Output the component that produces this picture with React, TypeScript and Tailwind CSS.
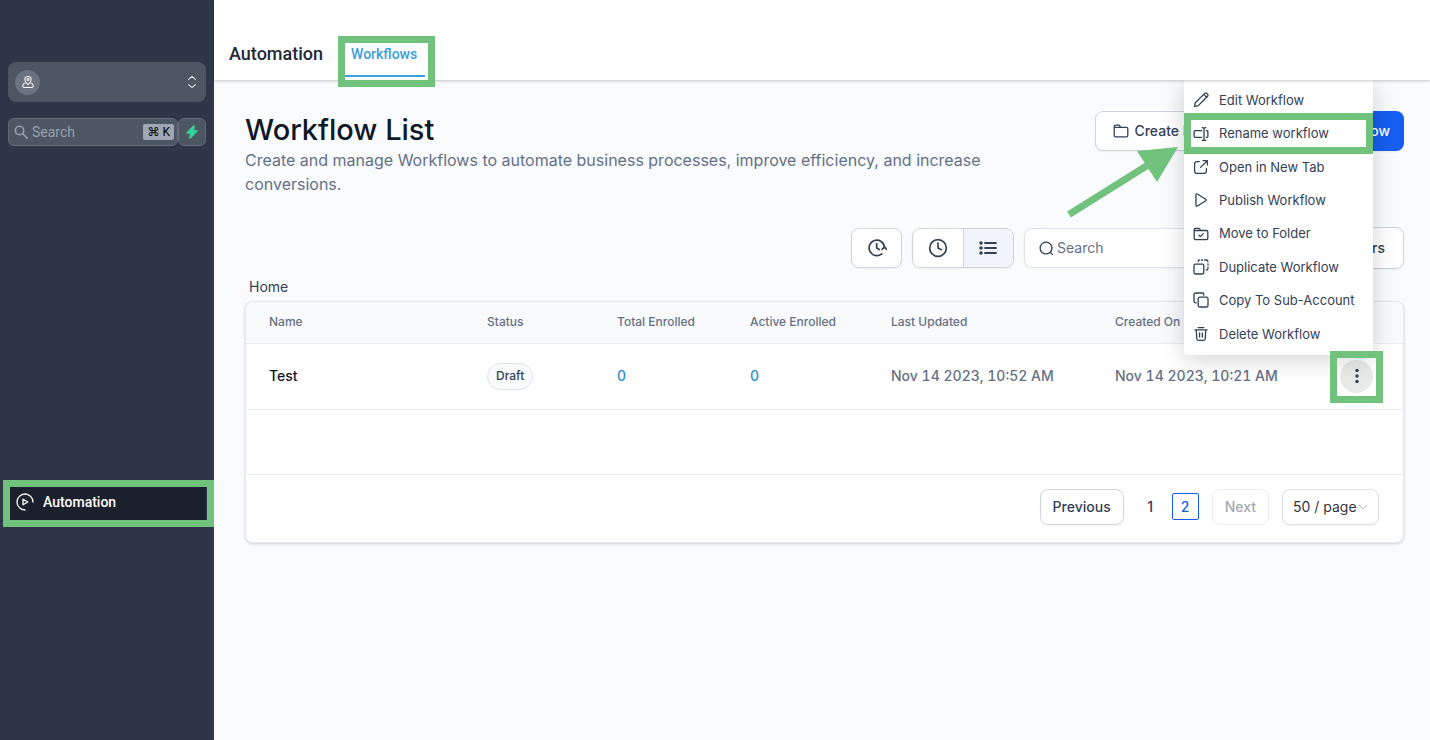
import React from "react";
import { ChevronDown, Clock } from "lucide-react";

type IconProps = { className?: string; children: React.ReactNode; width?: number };

function Icon({ className = "size-4", children, width = 1.3 }: IconProps) {
  return (
    <svg
      viewBox="0 0 16 16"
      className={className}
      fill="none"
      stroke="currentColor"
      strokeWidth={width}
      strokeLinecap="round"
      strokeLinejoin="round"
      aria-hidden="true"
    >
      {children}
    </svg>
  );
}

const menuItems: { label: string; icon: React.ReactNode; highlighted?: boolean }[] = [
  {
    label: "Edit Workflow",
    icon: <path d="M1.6 14.4l.5-3.4 8.6-8.6 2.9 2.9L5 13.9zM11 2.1l.7-.7a1.4 1.4 0 0 1 2 0l.9.9a1.4 1.4 0 0 1 0 2l-.7.7" />,
  },
  {
    label: "Rename workflow",
    highlighted: true,
    icon: (
      <>
        <path d="M8.6 4.7H2.1a1 1 0 0 0-1 1v4.6a1 1 0 0 0 1 1h6.5M13.3 4.7h.6a1 1 0 0 1 1 1v4.6a1 1 0 0 1-1 1h-.6" />
        <path d="M11 2.2v11.6M9.2 1.6c1 0 1.8.3 1.8 1 0-.7.8-1 1.8-1M9.2 14.4c1 0 1.8-.3 1.8-1 0 .7.8 1 1.8 1" />
      </>
    ),
  },
  {
    label: "Open in New Tab",
    icon: <path d="M6.3 2.6H4A2.4 2.4 0 0 0 1.6 5v7A2.4 2.4 0 0 0 4 14.4h7a2.4 2.4 0 0 0 2.4-2.4V9.7M10 1.6h4.4V6M14.2 1.8L7.6 8.4" />,
  },
  {
    label: "Publish Workflow",
    icon: <path d="M2.9 2.8c0-.8.8-1.2 1.4-.8l8.5 5.2c.6.4.6 1.2 0 1.6L4.3 14c-.6.4-1.4 0-1.4-.8z" />,
  },
  {
    label: "Move to Folder",
    icon: (
      <>
        <path d="M1.2 12.2V3.6c0-.7.5-1.2 1.2-1.2h3.3c.5 0 .9.2 1.1.6l.9 1.5h5.7c.8 0 1.4.6 1.4 1.4v6.3c0 .8-.6 1.4-1.4 1.4H2.6c-.8 0-1.4-.6-1.4-1.4zM1.4 4.5h6" />
        <path d="M5.8 9.1l1.5 1.5 3-3" />
      </>
    ),
  },
  {
    label: "Duplicate Workflow",
    icon: (
      <>
        <rect x="1" y="5.2" width="9.8" height="9.8" rx="1.4" />
        <path d="M5.2 2.6V2.3c0-.7.5-1.3 1.2-1.3M8.4 1h1.1M11.6 1h1.1M14.9 2.7c0-.9-.4-1.6-1.2-1.7M15 5v1.1M15 8.2v1M13.3 11c1 0 1.5-.5 1.6-1.2" />
      </>
    ),
  },
  {
    label: "Copy To Sub-Account",
    icon: (
      <>
        <rect x="5.2" y="5.2" width="9.8" height="9.8" rx="1.6" />
        <path d="M3.2 10.8h-.6A1.6 1.6 0 0 1 1 9.2V2.6A1.6 1.6 0 0 1 2.6 1h6.6a1.6 1.6 0 0 1 1.6 1.6v.6" />
      </>
    ),
  },
  {
    label: "Delete Workflow",
    icon: <path d="M1.9 3.8h12.2M5.2 1.6h5.6M3.2 3.8l.6 9c.1.9.6 1.5 1.5 1.5h5.4c.9 0 1.4-.6 1.5-1.5l.6-9M6.6 7v4M9.4 7v4" />,
  },
];

function Highlight({ className }: { className: string }) {
  return <span aria-hidden="true" className={`pointer-events-none absolute border-7 border-[#70c27c] ${className}`} />;
}

function Sidebar() {
  return (
    <aside className="flex w-[214px] shrink-0 flex-col bg-[#2d3748] px-2 pt-[62px] font-[Roboto,sans-serif]">
      <button type="button" aria-label="Switch account" className="flex h-10 items-center justify-between rounded-lg bg-[#4d5663] pr-2 pl-[7px] text-white">
        <span className="flex size-[25px] items-center justify-center rounded-full bg-[#6b7280]">
          <Icon className="size-[14px]" width={1.2}>
            <path d="M8 11C5.9 9 4.4 7.300 4.400 5.200a3.600 3.600 0 0 1 7.200 0C11.600 7.300 10.100 9 8 11z" />
            <circle cx="8" cy="5.200" r="1.100" />
            <path d="M4.600 9.200C2.900 9.700 2 10.900 2 12.200c0 1.200.9 2 2.200 2h7.600c1.300 0 2.200-.8 2.200-2 0-1.300-.9-2.500-2.600-3" />
          </Icon>
        </span>
        <Icon className="h-4 w-3 text-gray-200" width={1.4}>
          <path d="M3.500 4.500L8 .5l4.500 4M3.500 11.500l4.500 4 4.500-4" />
        </Icon>
      </button>

      <div className="mt-4 flex h-7">
        <label className="flex min-w-0 flex-1 items-center rounded-md border border-[#616a78] bg-[#4d5663] pr-[3px] pl-[5px]">
          <Icon className="size-[14px] shrink-0 text-gray-400" width={1.8}>
            <circle cx="6.300" cy="6.300" r="4.800" />
            <path d="M10 10l5 5" />
          </Icon>
          <input type="text" aria-label="Search" placeholder="Search" className="ml-1 min-w-0 flex-1 bg-transparent text-sm text-white outline-none placeholder:text-gray-400" />
          <kbd className="flex h-4 items-center rounded-xs bg-[#a0a6b2] px-1 font-[Roboto,'DejaVu_Sans',sans-serif] text-xs whitespace-nowrap text-black">⌘ K</kbd>
        </label>
        <button type="button" aria-label="Quick actions" className="flex w-7 items-center justify-center rounded-md border border-[#616a78] bg-[#4d5663]">
          <svg viewBox="0 0 12 14" className="h-[14px] w-3" aria-hidden="true">
            <path d="M7.200.8L.8 7.500c-.5.500-.2 1.100.5 1.100h3.100l-.9 3.900c-.1.800.6 1.200 1.200.7l6.500-6.800c.5-.5.2-1.100-.5-1.100H7.700l.8-3.800c.1-.8-.7-1.200-1.300-.7z" fill="#34d399" stroke="#34d399" strokeWidth="0.600" />
          </svg>
        </button>
      </div>

      <nav className="mt-[335px]">
        <a href="#automation" className="relative flex h-[45px] items-center gap-[9px] rounded-md bg-[#1a202c] pr-2 pb-1 pl-2 text-sm font-medium text-white">
          <svg viewBox="0 0 18 18" className="size-[18px]" fill="none" stroke="currentColor" strokeWidth="1.300" strokeLinecap="round" strokeLinejoin="round" aria-hidden="true">
            <path d="M17 9A8 8 0 1 0 9 17" />
            <path d="M7 6.200v5.600L11.800 9z" />
          </svg>
          Automation
          <Highlight className="-inset-y-px -right-2 -left-[5px]" />
        </a>
      </nav>
    </aside>
  );
}

function WorkflowMenu() {
  return (
    <div role="menu" className="absolute right-0 bottom-full mb-[5px] grid h-[275px] w-[189px] grid-rows-8 rounded-b-sm bg-white py-1 font-normal normal-nums shadow-[0_4px_24px_rgba(0,0,0,0.18)]">
      {menuItems.map((item) => (
        <button key={item.label} role="menuitem" type="button" className="relative flex items-center gap-[10px] pl-[9px] text-left text-[13px] whitespace-nowrap text-[#344054]">
          <Icon>{item.icon}</Icon>
          {item.label}
          {item.highlighted && <Highlight className="inset-x-0 -inset-y-1" />}
        </button>
      ))}
      <svg viewBox="0 0 120 80" className="pointer-events-none absolute top-[61px] right-full h-20 w-[120px]" aria-hidden="true">
        <path d="M5 73.500L92 19" stroke="#70c27c" strokeWidth="7" />
        <path d="M73 10L114 6L93 41z" fill="#70c27c" />
      </svg>
    </div>
  );
}

const iconButton = "flex items-center justify-center";

function Toolbar() {
  return (
    <div className="mt-[31px] flex h-[42px] items-center justify-end gap-[10px] text-[#344054]">
      <button type="button" aria-label="Recent executions" className={`${iconButton} h-10 w-[51px] rounded-lg border border-[#d0d5dd] bg-white shadow-xs`}>
        <svg viewBox="0 0 20 20" className="size-5" fill="none" stroke="currentColor" strokeWidth="1.700" strokeLinecap="round" strokeLinejoin="round" aria-hidden="true">
          <path d="M17.500 9.200A7.700 7.700 0 1 0 14.800 15.800" />
          <path d="M9.700 5.500V10l2.600 1.500M15 11.300l2.500-2.200 2 2.200" />
        </svg>
      </button>
      <div className="flex h-10 w-[102px] overflow-hidden rounded-lg border border-[#d0d5dd] bg-white shadow-xs">
        <button type="button" aria-label="Recent" className={`${iconButton} flex-1 border-r border-[#d0d5dd]`}>
          <Clock className="size-5" strokeWidth={2} />
        </button>
        <button type="button" aria-label="List" className={`${iconButton} flex-1 bg-[#f1f4f8]`}>
          <svg viewBox="0 0 18 16" className="h-4 w-[18px]" fill="none" stroke="currentColor" strokeWidth="1.800" strokeLinecap="round" aria-hidden="true">
            <path d="M6 3h11M6 8h11M6 13h11" />
            <path d="M2 3h.01M2 8h.01M2 13h.01" strokeWidth="3.600" />
          </svg>
        </button>
      </div>
      <label className="flex h-10 w-[267px] items-center gap-[3px] rounded-lg border border-[#e0e3e9] bg-white pl-[14px] shadow-xs">
        <Icon className="size-[15px] shrink-0" width={1.400}>
          <circle cx="7.500" cy="7.500" r="6.300" />
          <path d="M12.100 12.100l2.200 2.200" />
        </Icon>
        <input type="text" aria-label="Search workflows" placeholder="Search" className="min-w-0 flex-1 bg-transparent text-sm outline-none placeholder:text-[#667085]" />
      </label>
      <button type="button" className="flex h-[42px] w-[103px] items-center justify-end gap-2 rounded-lg border border-[#d0d5dd] bg-white pr-[18px] text-sm font-medium shadow-xs">
        <Icon>
          <path d="M2 4h12M4.500 8h7M6.500 12h3" />
        </Icon>
        Filters
      </button>
    </div>
  );
}

function WorkflowTable() {
  return (
    <div className="mt-1 rounded-lg border border-[#e6e8ec] bg-white shadow-[0_1px_3px_rgba(16,24,40,0.18)]">
      <table className="w-full table-fixed text-left">
        <colgroup>
          <col className="w-[218px]" />
          <col className="w-[130px]" />
          <col className="w-[133px]" />
          <col className="w-[141px]" />
          <col className="w-[224px]" />
          <col className="w-[219px]" />
          <col className="w-[92px]" />
        </colgroup>
        <thead>
          <tr className="h-[41px] border-b border-[#eaecf0] text-xs text-[#667085] *:bg-[#f9fafb] *:pl-[23px] *:font-medium">
            <th scope="col" className="rounded-tl-lg">Name</th>
            <th scope="col">Status</th>
            <th scope="col">Total Enrolled</th>
            <th scope="col">Active Enrolled</th>
            <th scope="col">Last Updated</th>
            <th scope="col">Created On</th>
            <th scope="col" aria-label="Actions" className="rounded-tr-lg" />
          </tr>
        </thead>
        <tbody>
          <tr className="h-[66px] border-b border-[#eaecf0] text-sm font-medium text-[#667085] tabular-nums *:pl-[23px]">
            <td className="text-[#101828]">Test</td>
            <td>
              <span className="inline-flex h-[27px] items-center rounded-full border border-[#dfe1e8] bg-[#f9fafb] px-2 text-xs text-[#344054]">Draft</span>
            </td>
            <td>
              <a href="#total-enrolled" className="text-[#2b8fc7]">0</a>
            </td>
            <td>
              <a href="#active-enrolled" className="text-[#2b8fc7]">0</a>
            </td>
            <td>Nov 14 2023, 10:52 AM</td>
            <td>Nov 14 2023, 10:21 AM</td>
            <td>
              <div className="relative mr-[30px] ml-auto size-[33px]">
                <button type="button" aria-label="Workflow actions" className="flex size-full items-center justify-center rounded-full bg-[#e8eaea] text-[#344054]">
                  <svg viewBox="0 0 16 16" className="size-4" fill="currentColor" aria-hidden="true">
                    <circle cx="8" cy="2.500" r="1.700" />
                    <circle cx="8" cy="8" r="1.700" />
                    <circle cx="8" cy="13.500" r="1.700" />
                  </svg>
                </button>
                <WorkflowMenu />
                <Highlight className="-inset-x-[10px] -top-[9px] -bottom-[10px]" />
              </div>
            </td>
          </tr>
          <tr className="h-[65px] border-b border-[#eaecf0]">
            <td colSpan={7} />
          </tr>
        </tbody>
      </table>
      <div className="flex h-[67px] items-center justify-end pr-6 pb-[3px] text-sm font-medium text-[#344054]">
        <button type="button" className="h-9 rounded-lg border border-[#d0d5dd] px-3 shadow-xs">Previous</button>
        <button type="button" className="ml-[13px] size-[27px]">1</button>
        <button type="button" aria-current="page" className="ml-2 size-[27px] rounded-xs border border-[#155eef] text-[#155eef]">2</button>
        <button type="button" disabled className="ml-[13px] h-9 rounded-lg border border-[#eaecf0] px-3 text-[#a3a8b3]">Next</button>
        <div className="relative ml-[13px]">
          <select aria-label="Rows per page" defaultValue="50" className="h-9 w-[97px] appearance-none rounded-lg border border-[#dcdfe4] bg-white pl-[10px] font-normal text-[#333639] shadow-xs">
            <option value="50">50 / page</option>
            <option value="100">100 / page</option>
          </select>
          <ChevronDown className="pointer-events-none absolute top-[10px] right-2 size-4 text-[#b8bcc4]" strokeWidth={1.5} />
        </div>
      </div>
    </div>
  );
}

export default function App() {
  return (
    <div className="flex min-h-screen bg-[#f9fbfd] font-[Inter,sans-serif]">
      <Sidebar />
      <div className="flex min-w-0 flex-1 flex-col">
        <header className="relative z-10 flex h-20 items-end bg-white pl-[15px] font-[Roboto,sans-serif] shadow-[0_1px_3px_rgba(0,0,0,0.22)]">
          <h2 className="pb-3 text-lg font-medium text-[#1f2937]">Automation</h2>
          <a href="#workflows" className="relative mb-[3px] ml-[22px] flex h-[33px] w-20 items-start border-b-2 border-[#3b9fdc] pl-1.5 text-sm font-medium text-[#3b9fdc]">
            Workflows
            <Highlight className="-top-2 -right-[10px] -bottom-3 -left-[7px]" />
          </a>
        </header>

        <main className="pt-[31px] pr-[26px] pl-[31px]">
          <div className="flex items-start justify-between">
            <div className="max-w-[760px]">
              <h1 className="text-[29px] leading-[37px] font-medium text-[#101828]">Workflow List</h1>
              <p className="text-base leading-6 text-[#667085]">
                Create and manage Workflows to automate business processes, improve efficiency, and increase conversions.
              </p>
            </div>
            <div className="flex shrink-0 gap-2 text-sm font-medium">
              <button type="button" className="flex h-10 items-center gap-[5px] rounded-lg border border-[#d0d5dd] bg-white pr-[10px] pl-[17px] text-[#344054] shadow-xs">
                <Icon>
                  <path d="M1.200 12.400V3.400c0-.7.500-1.200 1.200-1.200h3.300c.5 0 .9.200 1.100.6l.9 1.500h5.700c.8 0 1.400.6 1.400 1.400v6.700c0 .8-.6 1.400-1.400 1.400H2.600c-.8 0-1.400-.6-1.400-1.400zM1.400 4.300h6" />
                </Icon>
                Create Folder
              </button>
              <button type="button" className="flex h-10 items-center gap-1 rounded-lg bg-[#155eef] px-[14px] text-white shadow-xs">
                <Icon width={1.600}>
                  <path d="M8 3v10M3 8h10" />
                </Icon>
                Create Workflow
              </button>
            </div>
          </div>

          <Toolbar />

          <p className="mt-2 pl-1 text-sm leading-5 text-[#344054]">Home</p>
          <WorkflowTable />
        </main>
      </div>
    </div>
  );
}
